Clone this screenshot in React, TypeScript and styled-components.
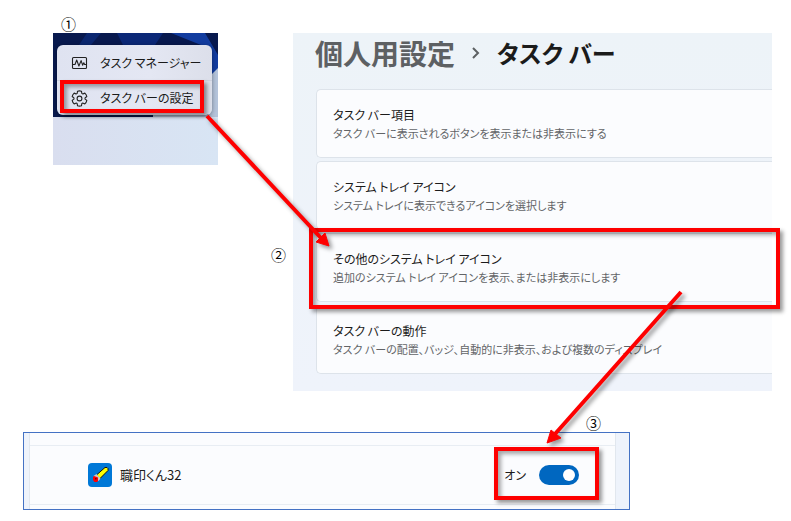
import React from "react";
import styled, { createGlobalStyle } from "styled-components";

const GlobalStyle = createGlobalStyle`
  * { box-sizing: border-box; }
  body {
    margin: 0;
    background: #fff;
    color: #1b1b1b;
    font-family: "Noto Sans CJK JP", sans-serif;
    font-feature-settings: "palt";
  }
  button, input { font: inherit; font-feature-settings: inherit; color: inherit; }
`;

const Page = styled.main`
  position: relative;
  padding: 14px 19px 10px 23px;
`;

const TopRow = styled.div`
  display: flex;
  align-items: flex-start;
  padding-left: 30px;
`;

const StepNumber = styled.span`
  display: block;
  font-size: 15px;
  line-height: 19px;
  color: #000;
`;

const FirstStep = styled.section`
  flex: 0 0 165px;
  ${StepNumber} { padding-left: 8px; }
`;

const Desktop = styled.div`
  position: relative;
  padding: 12px 6px 50px 4px;
`;

const Wallpaper = styled.svg`
  position: absolute;
  inset: 0;
  width: 100%;
  height: 100%;
`;

const ContextMenu = styled.div`
  position: relative;
  display: flex;
  flex-direction: column;
  border-radius: 6px;
  background: linear-gradient(90deg, #dfe3f1, #e4e7f3 60%, #dcdfea);
  box-shadow: 0 1px 4px rgba(0, 0, 0, 0.4);
`;

const MenuItem = styled.button`
  display: flex;
  align-items: center;
  gap: 12px;
  height: 35px;
  padding: 0 0 0 14px;
  border: 0;
  background: none;
  font-size: 12px;
  line-height: 20px;
  white-space: nowrap;
  & + & { border-top: 1px solid #cdd1de; }
`;

const Highlight = styled.span<{ $inset: string; $width?: string }>`
  position: absolute;
  inset: ${(p) => p.$inset};
  width: ${(p) => p.$width ?? "auto"};
  border: 4px solid #fe0000;
  box-shadow: 3px 3px 4px rgba(0, 0, 0, 0.4), inset 3px 3px 4px rgba(0, 0, 0, 0.35);
  pointer-events: none;
`;

const SecondStep = styled.section`
  flex: 1;
  display: flex;
  align-items: flex-start;
  gap: 7px;
  margin: 19px 0 0 53px;
  min-width: 0;
  > ${StepNumber} { margin-top: 212px; width: 15px; }
`;

const SettingsPanel = styled.div`
  position: relative;
  flex: 1;
  min-width: 0;
  padding: 0 0 17px 23px;
  background: linear-gradient(#edf3f8, #eff3fb);
`;

const Breadcrumb = styled.h1`
  display: flex;
  align-items: center;
  gap: 16px;
  height: 40px;
  margin: 0 0 16px -1px;
  font-size: 24px;
  line-height: 40px;
  font-weight: 600;
  white-space: nowrap;
`;

const Parent = styled.a`
  color: #5d6063;
  font-size: 28px;
  text-decoration: none;
`;

const CardList = styled.div`
  display: flex;
  flex-direction: column;
  gap: 3px;
`;

const Card = styled.button`
  display: block;
  height: 69px;
  padding: 0 0 0 16px;
  border: 1px solid #dde3ea;
  border-right: 0;
  border-radius: 5px 0 0 5px;
  background: #fbfcfe;
  text-align: left;
  white-space: nowrap;
`;

const CardTitle = styled.span`
  display: block;
  font-size: 12px;
  line-height: 18px;
`;

const CardNote = styled.span`
  display: block;
  font-size: 11px;
  line-height: 18px;
  color: #626467;
`;

const ThirdStep = styled.section`
  margin: 22px 142px 0 0;
  > ${StepNumber} { text-align: right; padding-right: 29px; }
`;

const TrayPanel = styled.div`
  position: relative;
  padding: 0 13px 0 5px;
  border: 1px solid #4472c4;
  background: #eef3fb;
`;

const TrayList = styled.div`
  padding: 12px 0 4px;
  border: solid #e1e7ee;
  border-width: 0 1px;
  background: #fbfcfe;
`;

const TrayRow = styled.label`
  display: flex;
  align-items: center;
  height: 60px;
  padding: 0 36px 0 58px;
  border: solid #e8edf3;
  border-width: 1px 0;
  font-size: 12px;
  line-height: 20px;
`;

const AppName = styled.span`
  flex: 1;
  padding-left: 8px;
  font-size: 13px;
`;

const Switch = styled.input`
  appearance: none;
  display: flex;
  align-items: center;
  width: 40px;
  height: 20px;
  margin: 0 0 0 13px;
  padding: 4px;
  border-radius: 10px;
  background: #0067c0;
  &::before {
    content: "";
    width: 12px;
    height: 12px;
    border-radius: 50%;
    background: #fff;
  }
  &:checked { justify-content: flex-end; }
`;

const Arrows = styled.svg`
  position: absolute;
  top: 0;
  left: 0;
  pointer-events: none;
  filter: drop-shadow(3px 3px 2px rgba(0, 0, 0, 0.4));
`;

const ActivityIcon = () => (
  <svg width="17" height="16" viewBox="0 0 17 16" fill="none" stroke="#222" strokeWidth="1.1" strokeLinejoin="round">
    <rect x="1.5" y="2.5" width="14" height="11" rx="1" />
    <path d="M2 9.5h2L5.7 5l2.2 6 2.2-5.4 1.5 4.6 1.2-2.4.8 1.7H15" />
  </svg>
);

const gearPath = Array.from({ length: 6 }, (_, i) => {
  const at = (radius: number, degrees: number) => {
    const a = ((degrees + 30 + i * 60) * Math.PI) / 180;
    return `${(8.5 + radius * Math.cos(a)).toFixed(2)} ${(8.5 + radius * Math.sin(a)).toFixed(2)}`;
  };
  return `${i ? "L" : "M"}${at(5.6, -24)}Q${at(6.4, -20)} ${at(7.6, -15)}Q${at(8, 0)} ${at(7.6, 15)}Q${at(6.4, 20)} ${at(5.6, 24)}Q${at(5.5, 30)} ${at(5.6, 36)}`;
}).join("") + "Z";

const GearIcon = () => (
  <svg width="17" height="17" viewBox="0 0 17 17" fill="none" stroke="#222" strokeWidth="1.1" strokeLinejoin="round">
    <path d={gearPath} />
    <circle cx="8.5" cy="8.5" r="2.4" />
  </svg>
);

const StampIcon = () => (
  <svg width="24" height="24" viewBox="0 0 24 24">
    <rect width="24" height="24" rx="4" fill="#0078d7" />
    <path d="M8.5 12l8.500-7.500h2l1 1v2L11.500 16z" fill="#ff0" stroke="#111" />
    <path d="M5.500 13l3-2 4 4.500-2 2.500z" fill="#c8c8c8" />
    <path d="M5 14l1-1 4 1.500V18l-1 1H6.500L5 17z" fill="#f00" />
    <path d="M7 15h1.500v1.500H7z" fill="#700" />
  </svg>
);

const cards = [
  ["タスク バー項目", "タスク バーに表示されるボタンを表示または非表示にする"],
  ["システム トレイ アイコン", "システム トレイに表示できるアイコンを選択します"],
  ["その他のシステム トレイ アイコン", "追加のシステム トレイ アイコンを表示、または非表示にします"],
  ["タスク バーの動作", "タスク バーの配置、バッジ、自動的に非表示、および複数のディスプレイ"],
];

export default function App() {
  return (
    <>
      <GlobalStyle />
      <Page>
        <TopRow>
          <FirstStep>
            <StepNumber>①</StepNumber>
            <Desktop>
              <Wallpaper viewBox="0 0 165 132" preserveAspectRatio="none">
                <defs>
                  <linearGradient id="taskbar">
                    <stop stopColor="#d9deef" />
                    <stop offset="1" stopColor="#d8e5f4" />
                  </linearGradient>
                </defs>
                <path d="M0 0h165v84H0z" fill="#08194e" />
                <path d="M34 0h14L38 12H26z" fill="#0b2770" />
                <path d="M64 0h46l-8 12H70z" fill="#0b2877" />
                <path d="M118 0h34l13 22v26l-7-8V16z" fill="#123c9f" />
                <path d="M158 42l7-7v49h-10z" fill="#b4c3da" />
                <path d="M100 82h65v2h-65z" fill="#b4c3da" />
                <path d="M0 84h165v48H0z" fill="url(#taskbar)" />
              </Wallpaper>
              <ContextMenu>
                <MenuItem><ActivityIcon />タスク マネージャー</MenuItem>
                <MenuItem><GearIcon />タスク バーの設定</MenuItem>
                <Highlight $inset="35px 8px 2px 3px" />
              </ContextMenu>
            </Desktop>
          </FirstStep>
          <SecondStep>
            <StepNumber>②</StepNumber>
            <SettingsPanel>
              <Breadcrumb>
                <Parent href="#personalization">個人用設定</Parent>
                <svg width="10" height="14" viewBox="0 0 10 14" fill="none" stroke="#5d6063" strokeWidth="2">
                  <path d="M2 2l5 5-5 5" />
                </svg>
                <span>タスク バー</span>
              </Breadcrumb>
              <CardList>
                {cards.map(([title, note]) => (
                  <Card key={title}>
                    <CardTitle>{title}</CardTitle>
                    <CardNote>{note}</CardNote>
                  </Card>
                ))}
              </CardList>
              <Highlight $inset="195px -8px 82px 16px" />
            </SettingsPanel>
          </SecondStep>
        </TopRow>
        <ThirdStep>
          <StepNumber>③</StepNumber>
          <TrayPanel>
            <TrayList>
              <TrayRow>
                <StampIcon />
                <AppName>職印くん32</AppName>
                <span>オン</span>
                <Switch type="checkbox" role="switch" defaultChecked />
              </TrayRow>
            </TrayList>
            <Highlight $inset="14px 30px 9px auto" $width="105px" />
          </TrayPanel>
        </ThirdStep>
        <Arrows width="791" height="521" viewBox="0 0 791 521" fill="#fe0000" stroke="#fe0000">
          <path d="M207 116L321 238M681 292L555 434" strokeWidth="4" />
          <path d="M329 246L316 242L325 233ZM547 443L551 430L561 438Z" strokeWidth="1" />
        </Arrows>
      </Page>
    </>
  );
}
